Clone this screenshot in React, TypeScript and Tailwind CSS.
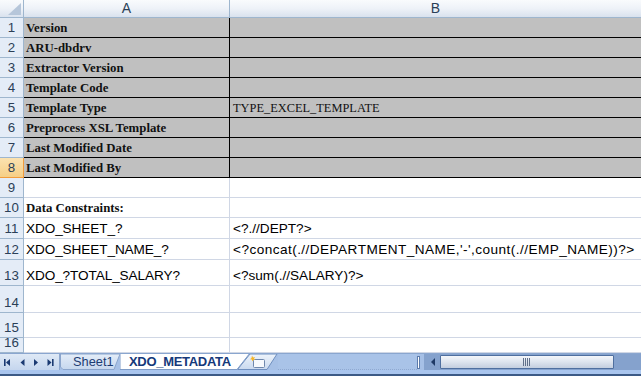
import React from "react";

type Row = {
  n: number;
  h: number;
  a?: string;
  b?: string;
  wide?: boolean;
  kind: "meta" | "plain" | "data" | "label";
};

const rows: Row[] = [
  { n: 1, h: 20, a: "Version", kind: "meta" },
  { n: 2, h: 20, a: "ARU-dbdrv", kind: "meta" },
  { n: 3, h: 20, a: "Extractor Version", kind: "meta" },
  { n: 4, h: 20, a: "Template Code", kind: "meta" },
  { n: 5, h: 20, a: "Template Type", b: "TYPE_EXCEL_TEMPLATE", kind: "meta" },
  { n: 6, h: 20, a: "Preprocess XSL Template", kind: "meta" },
  { n: 7, h: 20, a: "Last Modified Date", kind: "meta" },
  { n: 8, h: 20, a: "Last Modified By", kind: "meta" },
  { n: 9, h: 20, kind: "plain" },
  { n: 10, h: 20, a: "Data Constraints:", kind: "label" },
  { n: 11, h: 21, a: "XDO_SHEET_?", b: "<?.//DEPT?>", kind: "data" },
  {
    n: 12,
    h: 21,
    a: "XDO_SHEET_NAME_?",
    b: "<?concat(.//DEPARTMENT_NAME,'-',count(.//EMP_NAME))?>",
    wide: true,
    kind: "data",
  },
  { n: 13, h: 26, a: "XDO_?TOTAL_SALARY?", b: "<?sum(.//SALARY)?>", kind: "data" },
  { n: 14, h: 27, kind: "plain" },
  { n: 15, h: 25, kind: "plain" },
  { n: 16, h: 15, kind: "plain" },
];

function RowHeader({ n, active }: { n: number; active: boolean }) {
  return (
    <div
      className={
        "w-[24px] shrink-0 flex items-end justify-center pb-[2px] border-r border-b text-[13.3px] leading-[15px] font-['Liberation_Sans',Arial,sans-serif] " +
        (active
          ? "bg-gradient-to-b from-[#fbe2b0] to-[#f6cf86] border-[#f29c3c] text-[#2b3f57]"
          : "bg-[#e4ecf7] border-[#9eb6ce] text-[#2b3f57]")
      }
    >
      {n}
    </div>
  );
}

function GridRow({ r }: { r: Row }) {
  const meta = r.kind === "meta";
  const line = meta ? "border-black" : "border-[#d0d7e5]";
  const fill = meta ? "bg-[#c0c0c0]" : "bg-white";
  const serifBold =
    "font-['Liberation_Serif','Times_New_Roman',serif] font-bold text-[12.8px] leading-[15px] text-[#111] pb-[1px]";
  const serifReg =
    "font-['Liberation_Serif','Times_New_Roman',serif] text-[12.4px] leading-[15px] text-[#111] pb-[1px]";
  const sans =
    "font-['Liberation_Sans',Arial,sans-serif] text-[13.6px] leading-[15px] text-black pb-[2px]";
  const aFont = r.kind === "data" ? sans + " tracking-[-0.1px]" : serifBold;
  const bFont =
    r.kind === "data"
      ? sans + (r.wide ? " tracking-[0.45px]" : " tracking-[0px]")
      : serifReg;
  return (
    <div className="flex shrink-0" style={{ height: r.h }}>
      <RowHeader n={r.n} active={r.n === 8} />
      <div
        className={`w-[206px] shrink-0 flex items-end pl-[2px] border-r border-b whitespace-nowrap overflow-hidden ${line} ${fill} ${aFont}`}
      >
        {r.a}
      </div>
      <div
        className={`flex-1 flex items-end pl-[3px] border-b whitespace-nowrap overflow-hidden ${line} ${fill} ${bFont}`}
      >
        {r.b}
      </div>
    </div>
  );
}

function ColumnHeader() {
  const hdr =
    "bg-gradient-to-b from-[#f9fbfd] via-[#eef2f8] to-[#d9e2ee] border-b border-[#9eb6ce] flex items-center justify-center text-[14px] text-[#2b3f57] font-['Liberation_Sans',Arial,sans-serif]";
  return (
    <div className="flex h-[18px] shrink-0">
      <div className={`w-[24px] shrink-0 border-r border-[#9eb6ce] relative ${hdr}`}>
        <svg className="absolute left-0 top-0" width="23" height="17" viewBox="0 0 23 17">
          <path d="M8 15 L21 15 L21 3 Z" fill="#b6c6da" />
        </svg>
      </div>
      <div className={`w-[206px] shrink-0 border-r border-[#9eb6ce] ${hdr}`}>A</div>
      <div className={`flex-1 ${hdr}`}>B</div>
    </div>
  );
}

function NavArrows() {
  const c = "#1b3a72";
  return (
    <div className="w-[60px] shrink-0 h-full bg-gradient-to-b from-[#dfe9f6] to-[#c5d6ee] border-r border-[#8ea8cf]">
      <svg width="59" height="17" viewBox="0 0 59 17">
        <rect x="4" y="5" width="1.6" height="7" fill={c} />
        <path d="M10 5 L6 8.5 L10 12 Z" fill={c} />
        <path d="M24.5 5 L20.5 8.5 L24.5 12 Z" fill={c} />
        <path d="M34 5 L38 8.5 L34 12 Z" fill={c} />
        <path d="M47.5 5 L51.5 8.5 L47.5 12 Z" fill={c} />
        <rect x="52" y="5" width="1.6" height="7" fill={c} />
      </svg>
    </div>
  );
}

function TabStrip() {
  return (
    <div className="flex flex-col h-[23px] shrink-0">
      <div className="flex h-[17px] bg-[#a6c0e6] border-t border-[#8aa6cf]">
        <NavArrows />
        {/* Sheet1 tab */}
        <div className="relative w-[60px] shrink-0 h-full">
          <svg className="absolute inset-0" width="60" height="16" viewBox="0 0 60 16">
            <defs>
              <linearGradient id="g1" x1="0" y1="0" x2="0" y2="1">
                <stop offset="0" stopColor="#e4edf8" />
                <stop offset="1" stopColor="#c6d7ee" />
              </linearGradient>
            </defs>
            <path d="M0.5 0 L0.5 13 L3 15.5 L54 15.5 L60 0 Z" fill="url(#g1)" stroke="#8ba5cc" />
          </svg>
          <span className="relative flex h-full items-center pl-[13px] text-[12.8px] text-[#1d3c72] font-['Liberation_Sans',Arial,sans-serif]">
            Sheet1
          </span>
        </div>
        {/* Active tab */}
        <div className="relative z-10 w-[130px] shrink-0 h-full">
          <svg className="absolute inset-0" width="130" height="16" viewBox="0 0 130 16">
            <path d="M0 -1 L0 15.5 L117 15.5 L130 -1" fill="#ffffff" stroke="#7f9cc7" />
          </svg>
          <span className="relative flex h-full items-center pl-[9px] text-[13px] font-bold text-[#15397a] font-['Liberation_Sans',Arial,sans-serif] tracking-[-0.3px]">
            XDO_METADATA
          </span>
        </div>
        {/* Insert worksheet tab */}
        <div className="relative w-[41px] shrink-0 h-full -ml-[13px]">
          <svg className="absolute inset-0" width="41" height="16" viewBox="0 0 41 16">
            <defs>
              <linearGradient id="g2" x1="0" y1="0" x2="0" y2="1">
                <stop offset="0" stopColor="#eef4fb" />
                <stop offset="1" stopColor="#c9d9ef" />
              </linearGradient>
            </defs>
            <path d="M13 0 L0.5 15.5 L30 15.5 L40 0 Z" fill="url(#g2)" stroke="#6f8fbf" />
            <rect x="16.5" y="5.5" width="11" height="8" rx="1" fill="#f6f9fd" stroke="#6f88ad" />
            <path d="M15 1.5 L16 3.5 L18 3 L17 4.7 L18.5 6 L16.5 5.8 L15.5 7.5 L14.8 5.5 L13 5.3 L14.5 4 Z" fill="#f6b526" />
          </svg>
        </div>
        {/* dotted filler */}
        <div className="flex-1 h-full bg-[#a9c3e8] border-b border-dotted border-[#8fa9d2]" />
        {/* splitter */}
        <div className="w-[3px] shrink-0 h-[13px] self-center bg-white border border-[#5c7bab] mr-[4px]" />
        {/* scroll area */}
        <div className="w-[217px] shrink-0 h-full bg-[#85a2cd] flex items-center">
          <svg width="16" height="16" viewBox="0 0 16 16" className="shrink-0">
            <path d="M11 4 L7 8 L11 12 Z" fill="#1f3a66" />
          </svg>
          <div className="w-[174px] h-[14px] shrink-0 rounded-[1px] border border-[#4f6f9f] bg-gradient-to-b from-[#f4f6fa] via-[#dde4ee] to-[#c3cedf] flex items-center justify-center">
            <svg width="8" height="8" viewBox="0 0 8 8">
              <path d="M0.5 0 V8 M2.5 0 V8 M4.5 0 V8 M6.5 0 V8" stroke="#60708a" strokeWidth="1" />
            </svg>
          </div>
        </div>
      </div>
      <div className="h-[4px] bg-[#a9c5ee]" />
      <div className="h-[2px] bg-[#3c5a86]" />
    </div>
  );
}

export default function App() {
  return (
    <div className="w-[641px] h-[376px] overflow-hidden bg-white flex flex-col">
      <ColumnHeader />
      <div className="flex flex-col flex-1 overflow-hidden">
        {rows.map((r) => (
          <GridRow key={r.n} r={r} />
        ))}
      </div>
      <TabStrip />
    </div>
  );
}
